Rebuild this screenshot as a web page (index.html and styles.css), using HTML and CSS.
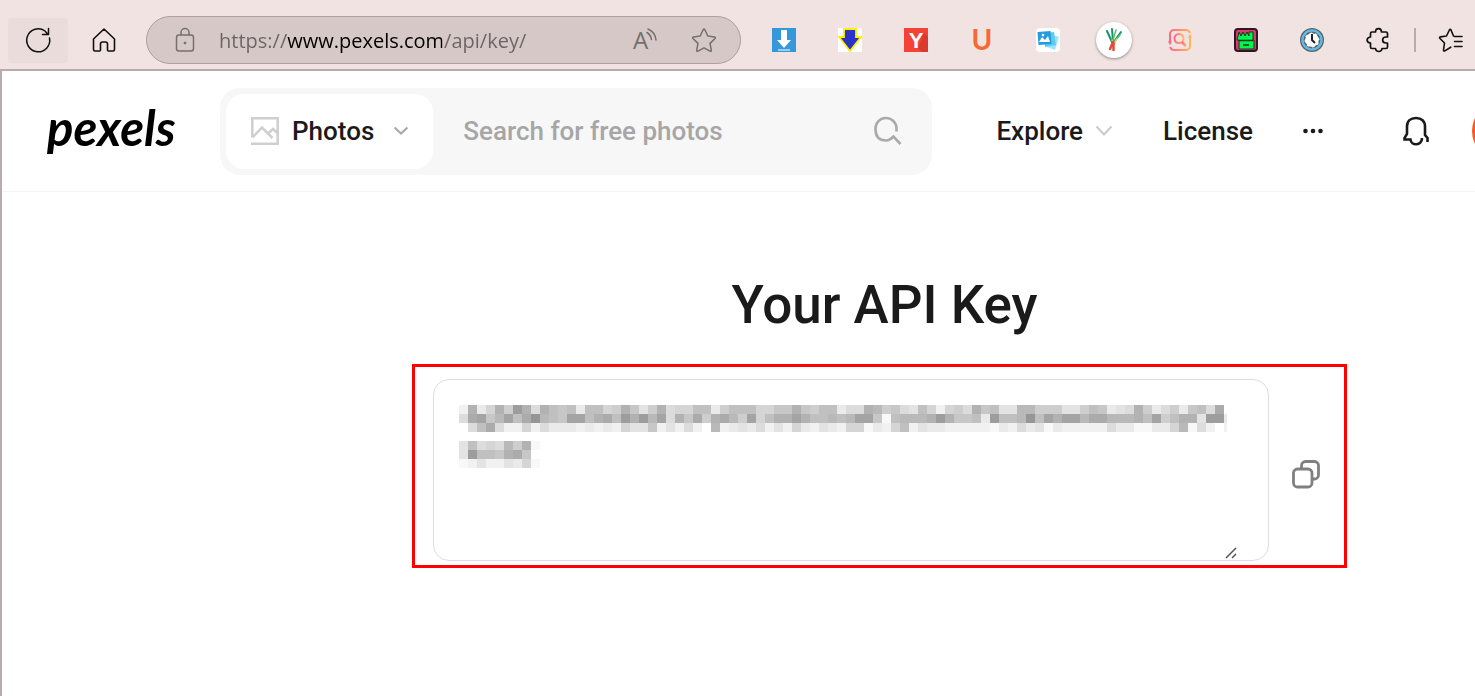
FILE: index.html
```html
<!DOCTYPE html>
<html lang="en">

<head>
    <meta charset="UTF-8">
    <meta name="viewport" content="width=device-width, initial-scale=1.0">
    <title>Your API Key</title>
    <link rel="stylesheet" href="styles.css">
</head>

<body>
    <div class="toolbar">
        <button class="tool reload" aria-label="Refresh">
            <svg width="26" height="26" viewBox="0 0 26 26" fill="none" stroke="#111" stroke-width="1.5" stroke-linecap="round" stroke-linejoin="round">
                <path d="M24.5 11A11.5 11.5 0 1 1 20 4l3 3.500M23.500 1.500v6h-6" />
            </svg>
        </button>
        <button class="tool home" aria-label="Home">
            <svg width="24" height="26" viewBox="0 0 24 26" fill="none" stroke="#111" stroke-width="1.6" stroke-linejoin="round">
                <path d="M1.500 12 12 2l10.500 10v10.500a1.500 1.500 0 0 1-1.500 1.500h-4.500a1 1 0 0 1-1-1v-6a2 2 0 0 0-2-2h-3a2 2 0 0 0-2 2v6a1 1 0 0 1-1 1H3a1.500 1.500 0 0 1-1.500-1.500z" />
            </svg>
        </button>
        <div class="address">
            <svg width="20" height="26" viewBox="0 0 20 26" fill="none" stroke="#74706e" stroke-width="1.5">
                <rect x="1.500" y="8" width="17" height="16" rx="2.500" />
                <path d="M6 8V5.500a4 4 0 0 1 8 0V8" />
                <circle cx="10" cy="16" r="1" fill="#74706e" stroke-width="1" />
            </svg>
            <input class="url" type="text" value="https://www.pexels.com/api/key/" aria-label="Address" spellcheck="false">
            <button class="plain" aria-label="Read aloud">
                <svg width="24" height="26" viewBox="0 0 24 26" fill="none" stroke="#74706e" stroke-width="1.5" stroke-linecap="round">
                    <text class="aloud" x="0" y="22">A</text>
                    <path d="M14 5.500c2.500 1.500 4 4 4.500 7M15 2c4.500 2 7.500 6 8 11" />
                </svg>
            </button>
            <button class="plain star" aria-label="Add to favorites">
                <svg width="26" height="26" viewBox="0 0 26 26" fill="none" stroke="#74706e" stroke-width="1.5" stroke-linejoin="round">
                    <path d="M12.200 2.600q.8-1.300 1.600 0l3 6.400 6.700.9q1.500.4.5 1.600l-5 4.900 1.300 6.800q.1 1.500-1.300.9L13 20.800l-6 3.300q-1.400.6-1.300-.9L7 16.400l-5-4.900q-1-1.200.5-1.600l6.700-.9z" />
                </svg>
            </button>
        </div>
        <div class="extensions">
            <button class="ext" aria-label="Downloader">
                <svg width="24" height="24" viewBox="0 0 24 24">
                    <rect width="24" height="24" fill="#3498db" />
                    <path d="M9 2h6v10h4l-7 8-7-8h4zM6 21.500h12v1H6z" fill="#fff" />
                </svg>
            </button>
            <button class="ext" aria-label="Video downloader">
                <svg width="24" height="24" viewBox="0 0 24 24">
                    <rect width="24" height="24" fill="#fff" />
                    <path d="M6 1h12v8h5L12 23 1 9h5z" fill="#2a32c8" stroke="#fff000" stroke-width="1.800" />
                </svg>
            </button>
            <button class="ext" aria-label="Y extension">
                <svg width="24" height="24" viewBox="0 0 24 24">
                    <rect width="24" height="24" fill="#f44336" />
                    <path d="M14 20 20 5l4 4v15h-6z" fill="#d83a30" />
                    <text class="badge-y" x="12" y="20">Y</text>
                </svg>
            </button>
            <button class="ext" aria-label="U extension">
                <svg width="24" height="24" viewBox="0 0 24 24">
                    <text class="badge-u" x="12" y="22">U</text>
                </svg>
            </button>
            <button class="ext" aria-label="Image downloader">
                <svg width="24" height="24" viewBox="0 0 24 24">
                    <rect width="24" height="24" rx="4" fill="#fff" />
                    <path d="m14 6 9 3-4 13-8-3z" fill="#9ce5fa" />
                    <path d="m8 5 10-1 2 13-11 2z" fill="#5dcbf4" />
                    <path d="m1.500 4 13-1 1 13-13 1z" fill="#249bdc" />
                    <path d="m3 14 3-5 3 3 3-4 2 6z" fill="#fff" />
                    <circle cx="7" cy="7" r="1.300" fill="#fff" />
                </svg>
            </button>
            <button class="ext round" aria-label="Scallion">
                <svg width="24" height="24" viewBox="0 0 24 24" fill="none" stroke-linecap="round">
                    <path d="m5 3 5 11M10 1l1 12M19 4l-8 11" stroke="#14966a" stroke-width="2" />
                    <path d="m14 2-3 10M18 7l-6 7" stroke="#66b86a" stroke-width="1.500" />
                    <path d="m10 12 2 4 3-5" stroke="#e9c977" stroke-width="1.500" />
                    <path d="m11 14-3 7M11.500 15v7" stroke="#e34b3c" stroke-width="2.500" />
                </svg>
            </button>
            <button class="ext" aria-label="Image search">
                <svg width="24" height="24" viewBox="0 0 24 24" fill="none" stroke="url(#sunset)" stroke-width="2">
                    <defs>
                        <linearGradient id="sunset">
                            <stop offset="0" stop-color="#ff6584" />
                            <stop offset="1" stop-color="#ffb861" />
                        </linearGradient>
                    </defs>
                    <path d="M2 14V6a4 4 0 0 1 4-4h12q3 0 4 3M22 10v8a4 4 0 0 1-4 4H6q-3 0-4-3M1 13l1 2 1-2M21 10l1-2 1 2" />
                    <circle cx="11" cy="10.500" r="4.500" />
                    <path d="m14 14 4 4" stroke-width="2.500" />
                </svg>
            </button>
            <button class="ext" aria-label="Archive">
                <svg width="24" height="24" viewBox="0 0 24 24">
                    <rect width="24" height="24" rx="4" fill="#35122c" />
                    <rect x="2" y="2" width="20" height="20" rx="2" fill="#cf3f68" />
                    <path d="m3 12 2-8 2 4 2-4 2 4 2-4 2 4V4h4v8h1v9H5v-9z" fill="#00f64c" stroke="#12381d" />
                    <path d="M5 12.500h14M9 17h6" stroke="#073b17" stroke-width="1.500" />
                </svg>
            </button>
            <button class="ext" aria-label="Clock">
                <svg width="24" height="24" viewBox="0 0 24 24">
                    <circle cx="12" cy="12" r="12" fill="#53656f" />
                    <circle cx="12" cy="12" r="9.500" fill="none" stroke="#66b9df" stroke-width="2.500" />
                    <circle cx="12" cy="12" r="7.500" fill="#fff" stroke="#53656f" stroke-width="1.500" stroke-dasharray="3 2.900" />
                    <path d="M12 6v6l3 3" fill="none" stroke="#222" stroke-width="2" />
                </svg>
            </button>
            <button class="ext" aria-label="Extensions">
                <svg width="24" height="26" viewBox="0 0 24 26" fill="none" stroke="#111" stroke-width="1.700" stroke-linejoin="round">
                    <path d="M4.500 6.500Q4.500 5 6 5h3.500c0-4.500 6-4.500 6 0H20q1.500 0 1.500 1.500V10H20c-4.500 0-4.500 6 0 6h1.500v4q0 1.500-1.500 1.500h-4c-.5 4-6 4-6.500 0H6q-1.500 0-1.500-1.500v-4c-4.500-.5-4.500-5.500 0-6z" />
                </svg>
            </button>
        </div>
        <button class="tool favorites" aria-label="Favorites">
            <svg width="26" height="26" viewBox="0 0 26 26" fill="none" stroke="#111" stroke-width="1.600" stroke-linecap="round" stroke-linejoin="round">
                <path d="M15.500 9 13 3q-.8-1.500-1.600 0L8.500 9l-6 .9q-1.600.4-.5 1.600l4.500 4.500-1 7q0 1.500 1.300.9l6-3.700M16.500 9.500H24M16.500 14.500H24M16.500 19.500H24" />
            </svg>
        </button>
    </div>

    <div class="page">
        <header class="site-header">
            <a class="logo" href="#">pexels</a>
            <form class="search">
                <button class="media-type" type="button">
                    <svg width="28" height="28" viewBox="0 0 28 28" fill="none" stroke="#cfcfcf" stroke-width="2.500">
                        <path d="M1.300 20.500V1.300h25.400v25.400H0M1.500 20.500l9.500-10L21.500 21M17 16.500l5-4.500 4.500 4" />
                    </svg>
                    <span>Photos</span>
                    <svg width="16" height="10" viewBox="0 0 16 10" fill="none" stroke="#aaa" stroke-width="2.200">
                        <path d="m1.500 1.500 6.500 6 6.500-6" />
                    </svg>
                </button>
                <input class="search-text" type="text" placeholder="Search for free photos" aria-label="Search for free photos">
                <button class="plain" type="submit" aria-label="Search">
                    <svg width="28" height="28" viewBox="0 0 28 28" fill="none" stroke="#aaa" stroke-width="2.600">
                        <path d="M22.500 14.500V11A10.500 10.500 0 0 0 1.500 12c0 8 4 11.500 10.500 11.500 3.500 0 5-1.500 7.500-4l7 7.500" />
                    </svg>
                </button>
            </form>
            <nav class="menu">
                <button class="menu-item">
                    Explore
                    <svg width="18" height="12" viewBox="0 0 18 12" fill="none" stroke="#ccc" stroke-width="2.200">
                        <path d="m1.500 1.500 7.500 8 7.500-8" />
                    </svg>
                </button>
                <a class="menu-item" href="#">License</a>
                <button class="menu-item" aria-label="More">
                    <svg width="20" height="6" viewBox="0 0 20 6" fill="#1a1a1a">
                        <circle cx="2.500" cy="3" r="2.300" />
                        <circle cx="10" cy="3" r="2.300" />
                        <circle cx="17.500" cy="3" r="2.300" />
                    </svg>
                </button>
            </nav>
            <button class="plain bell" aria-label="Notifications">
                <svg width="26" height="30" viewBox="0 0 26 30" fill="none" stroke="#1a1a1a" stroke-width="2.600">
                    <path d="M24.500 26v-4l-2.500-3v-8.500C22 5 18.500 2 13 2s-9 3-9 8.500V18l-2.500 4v1.500h6c.5 6.500 11.500 6.500 11.500-1.500" />
                </svg>
            </button>
            <a class="avatar" href="#" aria-label="Profile"></a>
        </header>

        <main class="content">
            <h1>Your API Key</h1>
            <div class="key-frame">
                <div class="key-box">
                    <textarea class="key-text" aria-label="Your API Key" readonly></textarea>
                    <svg class="mosaic" width="768" height="63" shape-rendering="crispEdges" aria-hidden="true"></svg>
                </div>
                <button class="plain copy" aria-label="Copy key">
                    <svg width="28" height="28" viewBox="0 0 28 28" fill="none" stroke="#808080" stroke-width="2.800">
                        <rect x="1.500" y="9" width="18.500" height="18" rx="4" />
                        <path d="M9.500 9V5.500a4 4 0 0 1 4-4H22.500a4 4 0 0 1 4 4v9.500a4 4 0 0 1-4 4H20" />
                    </svg>
                </button>
            </div>
        </main>
    </div>

    <script>
        // one hex digit per cell, 0 is the darkest grey and f is white
        const rows = [
            'd4c94814a4676c669847b84a9966c8666997747866caa4587ab69d98a476bb55888bb867cba48ca8c76a3f',
            'a3275263056722643614152a47384358296442466565227e6555414776c16650624225335554628644b11c',
            'fa63add9dacccdcdcd9bb7dbdadf5dcbcadbd9cdbcd99ecd96dbccdddddecdacbecdddddacceecc95eadfd',
            '',
            'b6a9a584e',
            'b1667437f',
            'edbddbc9e'
        ];
        const cell = 9;
        const mosaic = document.querySelector('.mosaic');

        rows.forEach((row, y) => {
            row.split('').forEach((digit, x) => {
                const rect = document.createElementNS('http://www.w3.org/2000/svg', 'rect');
                const grey = 150 + parseInt(digit, 16) * 7;
                rect.setAttribute('x', x * cell);
                rect.setAttribute('y', y * cell);
                rect.setAttribute('width', cell);
                rect.setAttribute('height', cell);
                rect.setAttribute('fill', `rgb(${grey}, ${grey}, ${grey})`);
                mosaic.appendChild(rect);
            });
        });
    </script>
</body>

</html>
```

FILE: styles.css
```css
* {
    box-sizing: border-box;
}

body {
    margin: 0;
    min-height: 100vh;
    display: flex;
    flex-direction: column;
    overflow-x: hidden;
    background-color: #fff;
    color: #1a1a1a;
    font-family: Roboto, sans-serif;
}

button {
    display: flex;
    align-items: center;
    justify-content: center;
    padding: 0;
    border: none;
    background: none;
    color: inherit;
    font: inherit;
    cursor: pointer;
}

svg {
    display: block;
    flex-shrink: 0;
    overflow: visible;
}

/* browser toolbar */
.toolbar {
    display: flex;
    align-items: center;
    height: 71px;
    padding: 11px 0 0 8px;
    background-color: #f1e3e1;
    border-bottom: 2px solid #b9abab;
}

.tool {
    flex-shrink: 0;
    width: 60px;
    height: 45px;
    border-radius: 3px;
}

.reload {
    background-color: #eadcda;
}

.home {
    width: 72px;
}

.address {
    flex: 1;
    min-width: 0;
    display: flex;
    align-items: center;
    height: 48px;
    margin: 0 10px 0 6px;
    padding: 0 23px 0 28px;
    border: 1px solid #ae9fa0;
    border-radius: 24px;
    background-color: #d6c8c7;
}

/* host part of the address is darker than the rest */
.url {
    flex: 1;
    min-width: 0;
    padding: 0 0 0 24px;
    border: none;
    outline: none;
    background: linear-gradient(to right, #6b6463 92px, #000 92px, #000 247px, #6b6463 247px);
    -webkit-background-clip: text;
    background-clip: text;
    color: transparent;
    font-family: "Open Sans", sans-serif;
    font-size: 20px;
}

.star {
    margin-left: 34px;
}

.aloud {
    fill: #74706e;
    stroke: none;
    font-family: "Open Sans", sans-serif;
    font-size: 24px;
}

.extensions {
    display: flex;
    flex-shrink: 0;
}

.ext {
    width: 66px;
    height: 36px;
}

.round svg {
    box-sizing: content-box;
    padding: 6px;
    border-radius: 50%;
    background-color: #fff;
    box-shadow: 0 1px 3px rgba(0, 0, 0, 0.4);
}

.badge-y,
.badge-u {
    font-family: "Liberation Sans", sans-serif;
    font-size: 22px;
    font-weight: bold;
    text-anchor: middle;
    fill: #fff;
}

.badge-u {
    font-family: Lato, sans-serif;
    font-size: 28px;
    fill: #f76834;
}

.favorites {
    position: relative;
    width: 64px;
    padding-left: 16px;
}

.favorites::before {
    content: "";
    position: absolute;
    left: 3px;
    top: 10px;
    width: 2px;
    height: 24px;
    background-color: #b9abab;
}

/* pexels header */
.page {
    flex: 1;
    border-left: 2px solid #b9abab;
}

.site-header {
    display: flex;
    align-items: center;
    height: 121px;
    padding-left: 45px;
    border-bottom: 1px solid #f4f4f4;
    font-size: 26px;
    font-weight: 500;
    overflow: hidden;
}

.logo {
    flex-shrink: 0;
    width: 173px;
    padding-bottom: 8px;
    color: #000;
    font-family: Lato, sans-serif;
    font-size: 49px;
    font-style: italic;
    font-weight: bold;
    text-decoration: none;
}

.search {
    flex: 1;
    min-width: 0;
    display: flex;
    align-items: center;
    height: 87px;
    padding: 6px 30px 6px 6px;
    border-radius: 20px;
    background-color: #f7f7f7;
}

.media-type {
    gap: 13px;
    height: 75px;
    padding: 0 24px 0 25px;
    border-radius: 18px;
    background-color: #fff;
}

.media-type span {
    margin-right: 6px;
}

.search-text {
    flex: 1;
    min-width: 0;
    padding: 0 30px;
    border: none;
    outline: none;
    background: none;
    font: inherit;
}

.search-text::placeholder {
    color: #a6a6a6;
}

.menu {
    display: flex;
    align-items: center;
    gap: 50px;
    margin-left: 64px;
}

.menu-item {
    gap: 12px;
    color: #1a1a1a;
    text-decoration: none;
}

.bell {
    margin-left: 80px;
}

.avatar {
    flex-shrink: 0;
    width: 60px;
    height: 60px;
    margin: 0 -57px 0 43px;
    border-radius: 50%;
    background-color: #f75a25;
}

/* api key */
.content {
    padding: 76px 118px 76px 410px;
}

h1 {
    margin: 0 0 22px;
    font-size: 53px;
    font-weight: 500;
    line-height: 74px;
    text-align: center;
}

.key-frame {
    display: flex;
    align-items: center;
    gap: 23px;
    height: 204px;
    margin-right: 10px;
    padding: 11px 24px 3px 18px;
    border: 3px solid #f00;
}

.key-box {
    position: relative;
    flex: 1;
    height: 182px;
    padding: 0 30px 0 25px;
    border: 1px solid #ddd;
    border-radius: 16px;
}

.key-text {
    display: block;
    width: 100%;
    height: 180px;
    padding: 20px 0;
    border: none;
    outline: none;
    background: none;
    font: inherit;
    resize: vertical;
}

.key-text::-webkit-resizer {
    background: url("data:image/svg+xml,%3Csvg xmlns='http://www.w3.org/2000/svg' width='15' height='15' fill='none' stroke='%23555' stroke-width='1.5'%3E%3Cpath d='M3 13 13 3M9 13l4-4'/%3E%3C/svg%3E") no-repeat right bottom;
}

.mosaic {
    position: absolute;
    left: 25px;
    top: 25px;
    overflow: hidden;
    pointer-events: none;
}

.copy {
    margin-top: 8px;
}
```
